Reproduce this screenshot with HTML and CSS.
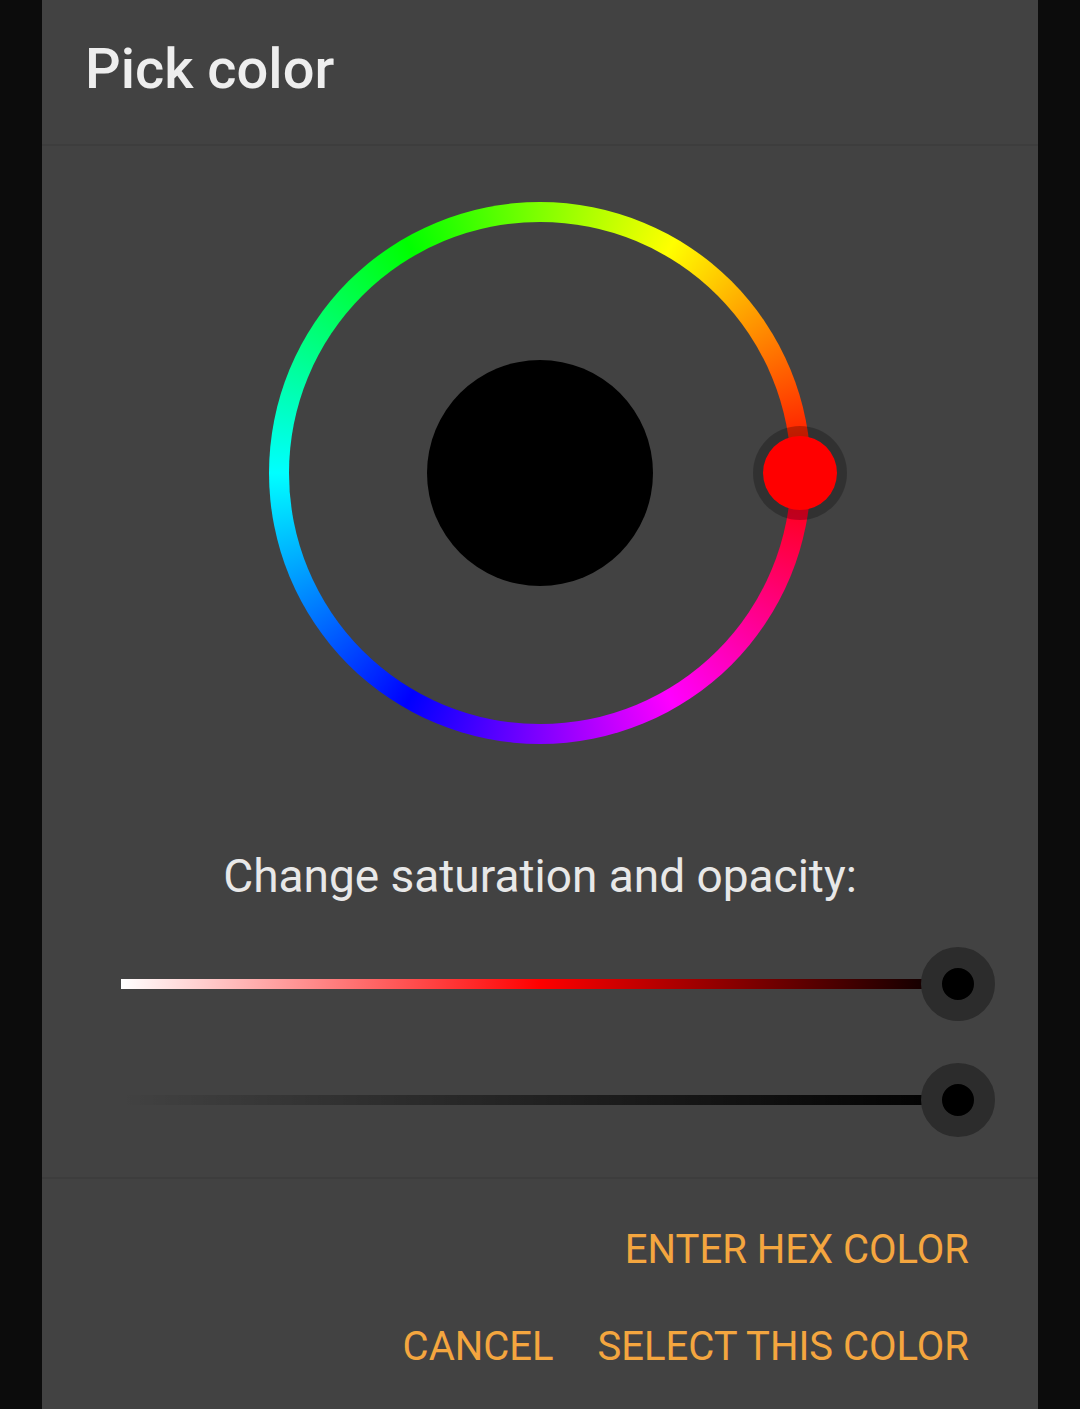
FILE: index.html
```html
<!DOCTYPE html>
<html lang="en">
<head>
  <meta charset="UTF-8">
  <title>Pick color</title>
  <link rel="stylesheet" href="styles.css">
</head>
<body>
  <div class="dialog">
    <div class="dialog-title">Pick color</div>

    <div class="dialog-body">
      <div class="wheel">
        <div class="wheel-inner">
          <div class="preview"></div>
        </div>
        <div class="wheel-thumb"></div>
      </div>

      <p class="hint">Change saturation and opacity:</p>

      <div class="slider-row slider-first">
        <div class="track track-sat">
          <span class="knob"></span>
        </div>
      </div>
      <div class="slider-row">
        <div class="track track-alpha">
          <span class="knob"></span>
        </div>
      </div>
    </div>

    <div class="dialog-actions">
      <div class="action-row">
        <button>ENTER HEX COLOR</button>
      </div>
      <div class="action-row">
        <button>CANCEL</button>
        <button>SELECT THIS COLOR</button>
      </div>
    </div>
  </div>
</body>
</html>
```

FILE: styles.css
```css
body {
  background-color: #0c0c0c;
  font-family: Roboto, 'Noto Sans', sans-serif;
  margin: 0;
  display: flex;
  justify-content: center;
}

.dialog {
  background-color: #424242;
  width: 996px;
  min-height: 1409px;
  display: flex;
  flex-direction: column;
}

.dialog-title {
  height: 146px;
  box-sizing: border-box;
  padding: 34px 0 0 43px;
  font-size: 56px;
  font-weight: 500;
  color: #eeeeee;
  line-height: 70px;
  border-bottom: 2px solid #3d3d3d;
}

.dialog-body {
  display: flex;
  flex-direction: column;
  align-items: center;
  padding-top: 56px;
  padding-bottom: 40px;
  border-bottom: 2px solid #3d3d3d;
}

/* hue ring */
.wheel {
  position: relative;
  width: 542px;
  height: 542px;
  border-radius: 50%;
  background: conic-gradient(from 90deg, #f00, #f0f, #00f, #0ff, #0f0, #ff0, #f00);
  display: flex;
  justify-content: center;
  align-items: center;
}

.wheel-inner {
  width: 502px;
  height: 502px;
  border-radius: 50%;
  background-color: #424242;
  display: flex;
  justify-content: center;
  align-items: center;
}

.preview {
  width: 226px;
  height: 226px;
  border-radius: 50%;
  background-color: #000;
}

.wheel-thumb {
  position: absolute;
  right: -36px;
  top: 224px;
  width: 74px;
  height: 74px;
  border-radius: 50%;
  background-color: #f00;
  border: 10px solid rgba(0, 0, 0, 0.25);
  background-clip: padding-box;
}

.hint {
  margin: 104px 0 0;
  font-size: 46px;
  line-height: 56px;
  color: #e8e8e8;
}

.slider-row {
  align-self: stretch;
  height: 74px;
  padding-left: 79px;
  display: flex;
  align-items: center;
  margin-top: 42px;
}

.slider-first {
  margin-top: 43px;
}

.track {
  position: relative;
  width: 837px;
  height: 10px;
}

.track-sat {
  background: linear-gradient(to right, #fff, #f00 50%, #000);
}

.track-alpha {
  background: linear-gradient(to right, rgba(0, 0, 0, 0), #000);
}

.knob {
  position: absolute;
  right: -37px;
  top: -32px;
  width: 32px;
  height: 32px;
  border-radius: 50%;
  background-color: #000;
  border: 21px solid #2c2c2c;
}

.dialog-actions {
  padding: 22px 69px 0 0;
}

.action-row {
  display: flex;
  justify-content: flex-end;
  gap: 44px;
  height: 97px;
  align-items: center;
}

button {
  background: none;
  border: none;
  padding: 0;
  font-family: Roboto, 'Noto Sans', sans-serif;
  font-size: 40px;
  color: #f4a63f;
  cursor: pointer;
}
```
